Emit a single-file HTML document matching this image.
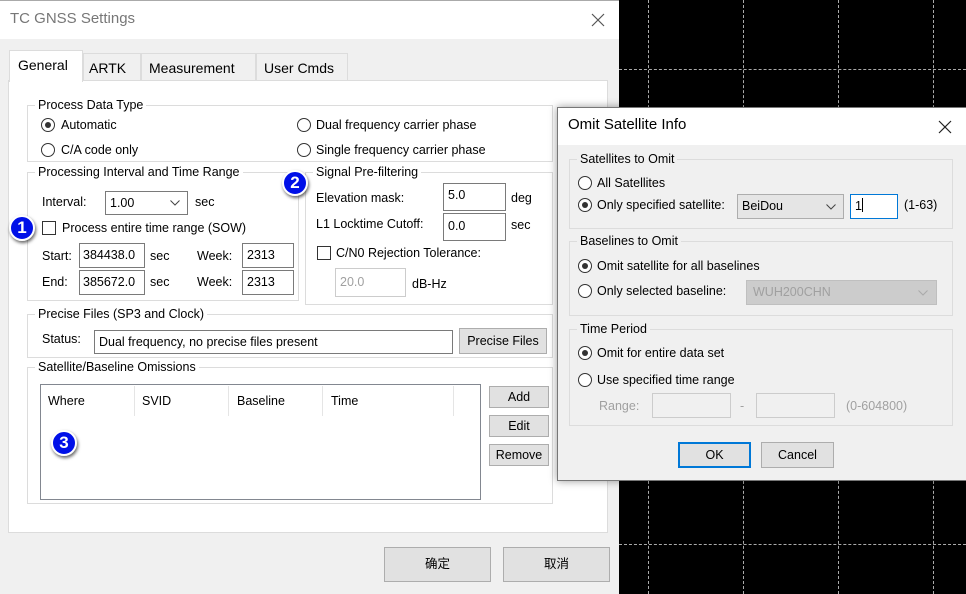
<!DOCTYPE html><html><head><meta charset="utf-8"><style>
*{margin:0;padding:0;box-sizing:border-box}
body{width:966px;height:594px;position:relative;overflow:hidden;background:#000;font-family:"Liberation Sans","Noto Sans CJK SC",sans-serif;font-size:12.5px;color:#000}
.a{position:absolute}
.t{position:absolute;line-height:16px;white-space:nowrap}
.g{position:absolute;border:1px solid #dcdcdc}
.lg{position:absolute;background:#f0f0f0;padding:0 3px;line-height:16px;white-space:nowrap}
.lgw{background:#fff}
.r{position:absolute;width:14px;height:14px;border:1px solid #333;border-radius:50%;background:#fff}
.r.on::after{content:"";position:absolute;left:3px;top:3px;width:6px;height:6px;border-radius:50%;background:#333}
.c{position:absolute;width:14px;height:14px;border:1px solid #333;background:#fff}
.box{position:absolute;border:1px solid #7a7a7a;background:#fff;line-height:20px;padding-left:4px}
.btn{position:absolute;border:1px solid #adadad;background:#e1e1e1;text-align:center}
.v{position:absolute;top:0;width:0;height:594px;border-left:1px dashed #aaa}
.h{position:absolute;left:619px;width:347px;height:0;border-top:1px dashed #aaa}
.badge{position:absolute;width:26px;height:26px;border-radius:50%;background:#0010e8;border:2px solid #fff;box-shadow:1px 2px 3px rgba(0,0,0,.6);color:#fff;font-weight:bold;font-size:17px;text-align:center;line-height:22px}
.dis{color:#a0a0a0}
</style></head><body>
<div class="v" style="left:648px"></div><div class="v" style="left:743px"></div><div class="v" style="left:838px"></div><div class="v" style="left:933px"></div>
<div class="h" style="top:69px"></div><div class="h" style="top:544px"></div>

<div class="a" style="left:0;top:0;width:619px;height:594px;background:#f0f0f0;border-top:1px solid #aaa"></div>
<div class="a" style="left:0;top:1px;width:619px;height:38px;background:#fff"></div>
<div class="t" style="left:10px;top:11px;font-size:15px;color:#777">TC GNSS Settings</div>
<svg class="a" style="left:591px;top:13px" width="14" height="14"><path d="M1 1L13 13M13 1L1 13" stroke="#555" stroke-width="1.2"/></svg>

<div class="a" style="left:8px;top:80px;width:600px;height:453px;background:#fff;border:1px solid #dcdcdc"></div>
<div class="a" style="left:83px;top:53px;width:58px;height:28px;background:#f0f0f0;border:1px solid #dcdcdc"></div>
<div class="a" style="left:141px;top:53px;width:115px;height:28px;background:#f0f0f0;border:1px solid #dcdcdc"></div>
<div class="a" style="left:256px;top:53px;width:92px;height:28px;background:#f0f0f0;border:1px solid #dcdcdc"></div>
<div class="a" style="left:9px;top:50px;width:74px;height:32px;background:#fff;border:1px solid #dcdcdc;border-bottom:none"></div>
<div class="t" style="left:18px;top:57px;font-size:14px">General</div>
<div class="t" style="left:89px;top:60px;font-size:14px">ARTK</div>
<div class="t" style="left:149px;top:60px;font-size:14px">Measurement</div>
<div class="t" style="left:264px;top:60px;font-size:14px">User Cmds</div>

<div class="g" style="left:27px;top:105px;width:526px;height:57px"></div>
<div class="lg lgw" style="left:35px;top:97px">Process Data Type</div>
<div class="r on" style="left:41px;top:118px"></div><div class="t" style="left:61px;top:117px">Automatic</div>
<div class="r" style="left:41px;top:143px"></div><div class="t" style="left:61px;top:142px">C/A code only</div>
<div class="r" style="left:297px;top:118px"></div><div class="t" style="left:316px;top:117px">Dual frequency carrier phase</div>
<div class="r" style="left:297px;top:143px"></div><div class="t" style="left:316px;top:142px">Single frequency carrier phase</div>

<div class="g" style="left:27px;top:172px;width:272px;height:129px"></div>
<div class="lg lgw" style="left:35px;top:164px">Processing Interval and Time Range</div>
<div class="t" style="left:42px;top:194px">Interval:</div>
<div class="box" style="left:105px;top:191px;width:83px;height:24px;line-height:22px">1.00</div>
<svg class="a" style="left:170px;top:200px" width="10" height="6"><path d="M0.5 0.5L5 5L9.5 0.5" fill="none" stroke="#444"/></svg>
<div class="t" style="left:195px;top:194px">sec</div>
<div class="c" style="left:42px;top:221px"></div><div class="t" style="left:62px;top:220px">Process entire time range (SOW)</div>
<div class="t" style="left:42px;top:248px">Start:</div>
<div class="box" style="left:79px;top:243px;width:66px;height:25px;line-height:23px;padding-left:3px">384438.0</div>
<div class="t" style="left:150px;top:248px">sec</div><div class="t" style="left:197px;top:248px">Week:</div>
<div class="box" style="left:242px;top:243px;width:52px;height:25px;line-height:23px">2313</div>
<div class="t" style="left:42px;top:274px">End:</div>
<div class="box" style="left:79px;top:270px;width:66px;height:25px;line-height:23px;padding-left:3px">385672.0</div>
<div class="t" style="left:150px;top:274px">sec</div><div class="t" style="left:197px;top:274px">Week:</div>
<div class="box" style="left:242px;top:270px;width:52px;height:25px;line-height:23px">2313</div>

<div class="g" style="left:305px;top:172px;width:248px;height:133px"></div>
<div class="lg lgw" style="left:313px;top:164px">Signal Pre-filtering</div>
<div class="t" style="left:316px;top:190px">Elevation mask:</div>
<div class="box" style="left:443px;top:183px;width:63px;height:28px;line-height:22px">5.0</div>
<div class="t" style="left:511px;top:190px">deg</div>
<div class="t" style="left:316px;top:216px">L1 Locktime Cutoff:</div>
<div class="box" style="left:443px;top:213px;width:63px;height:28px;line-height:24px">0.0</div>
<div class="t" style="left:511px;top:217px">sec</div>
<div class="c" style="left:317px;top:246px"></div><div class="t" style="left:336px;top:245px">C/N0 Rejection Tolerance:</div>
<div class="box dis" style="left:335px;top:268px;width:71px;height:29px;border-color:#ccc;line-height:27px">20.0</div>
<div class="t" style="left:412px;top:276px">dB-Hz</div>

<div class="g" style="left:27px;top:314px;width:526px;height:44px"></div>
<div class="lg lgw" style="left:35px;top:306px">Precise Files (SP3 and Clock)</div>
<div class="t" style="left:42px;top:331px">Status:</div>
<div class="box" style="left:94px;top:330px;width:359px;height:24px;line-height:22px">Dual frequency, no precise files present</div>
<div class="btn" style="left:459px;top:328px;width:88px;height:26px;line-height:24px">Precise Files</div>

<div class="g" style="left:27px;top:367px;width:526px;height:137px"></div>
<div class="lg lgw" style="left:35px;top:359px">Satellite/Baseline Omissions</div>
<div class="a" style="left:40px;top:384px;width:441px;height:116px;border:1px solid #828790;background:#fff"></div>
<div class="a" style="left:134px;top:386px;width:1px;height:30px;background:#e5e5e5"></div>
<div class="a" style="left:228px;top:386px;width:1px;height:30px;background:#e5e5e5"></div>
<div class="a" style="left:322px;top:386px;width:1px;height:30px;background:#e5e5e5"></div>
<div class="a" style="left:453px;top:386px;width:1px;height:30px;background:#e5e5e5"></div>
<div class="t" style="left:48px;top:393px">Where</div><div class="t" style="left:142px;top:393px">SVID</div>
<div class="t" style="left:237px;top:393px">Baseline</div><div class="t" style="left:331px;top:393px">Time</div>
<div class="btn" style="left:489px;top:386px;width:60px;height:22px;line-height:20px">Add</div>
<div class="btn" style="left:489px;top:415px;width:60px;height:22px;line-height:20px">Edit</div>
<div class="btn" style="left:489px;top:444px;width:60px;height:22px;line-height:20px">Remove</div>

<div class="btn" style="left:384px;top:547px;width:107px;height:35px;line-height:33px">确定</div>
<div class="btn" style="left:503px;top:547px;width:107px;height:35px;line-height:33px">取消</div>

<div class="badge" style="left:9px;top:215px">1</div>
<div class="badge" style="left:282px;top:170px">2</div>
<div class="badge" style="left:51px;top:430px">3</div>

<div class="a" style="left:557px;top:107px;width:412px;height:374px;background:#f0f0f0;border:1px solid #777;box-shadow:0 0 8px rgba(0,0,0,.4)"></div>
<div class="a" style="left:558px;top:108px;width:408px;height:37px;background:#fff"></div>
<div class="t" style="left:568px;top:117px;font-size:15px">Omit Satellite Info</div>
<svg class="a" style="left:938px;top:120px" width="14" height="14"><path d="M1 1L13 13M13 1L1 13" stroke="#222" stroke-width="1.2"/></svg>

<div class="g" style="left:569px;top:159px;width:384px;height:70px"></div>
<div class="lg" style="left:577px;top:151px">Satellites to Omit</div>
<div class="r" style="left:578px;top:176px"></div><div class="t" style="left:597px;top:175px">All Satellites</div>
<div class="r on" style="left:578px;top:198px"></div><div class="t" style="left:597px;top:197px">Only specified satellite:</div>
<div class="box" style="left:737px;top:194px;width:107px;height:25px;background:#e5e5e5;border-color:#adadad;line-height:23px">BeiDou</div>
<svg class="a" style="left:826px;top:204px" width="10" height="6"><path d="M0.5 0.5L5 5L9.5 0.5" fill="none" stroke="#444"/></svg>
<div class="box" style="left:850px;top:194px;width:48px;height:25px;border-color:#0078d7;line-height:23px">1<span style="display:inline-block;width:1px;height:14px;background:#000;vertical-align:-2px"></span></div>
<div class="t" style="left:904px;top:197px">(1-63)</div>

<div class="g" style="left:569px;top:241px;width:384px;height:75px"></div>
<div class="lg" style="left:577px;top:233px">Baselines to Omit</div>
<div class="r on" style="left:578px;top:259px"></div><div class="t" style="left:597px;top:258px">Omit satellite for all baselines</div>
<div class="r" style="left:578px;top:284px"></div><div class="t" style="left:597px;top:283px">Only selected baseline:</div>
<div class="box dis" style="left:746px;top:280px;width:191px;height:25px;background:#ccc;border-color:#bfbfbf;line-height:23px;padding-left:6px">WUH200CHN</div>
<svg class="a" style="left:918px;top:290px" width="10" height="6"><path d="M0.5 0.5L5 5L9.5 0.5" fill="none" stroke="#aaa"/></svg>

<div class="g" style="left:569px;top:329px;width:384px;height:97px"></div>
<div class="lg" style="left:577px;top:321px">Time Period</div>
<div class="r on" style="left:578px;top:346px"></div><div class="t" style="left:597px;top:345px">Omit for entire data set</div>
<div class="r" style="left:578px;top:373px"></div><div class="t" style="left:597px;top:372px">Use specified time range</div>
<div class="t dis" style="left:599px;top:398px">Range:</div>
<div class="box" style="left:652px;top:393px;width:79px;height:25px;border-color:#ccc;background:#f0f0f0"></div>
<div class="t dis" style="left:740px;top:398px">-</div>
<div class="box" style="left:756px;top:393px;width:79px;height:25px;border-color:#ccc;background:#f0f0f0"></div>
<div class="t dis" style="left:846px;top:398px">(0-604800)</div>

<div class="btn" style="left:678px;top:442px;width:73px;height:26px;line-height:22px;border:2px solid #0078d7">OK</div>
<div class="btn" style="left:761px;top:442px;width:73px;height:26px;line-height:24px">Cancel</div>
</body></html>
